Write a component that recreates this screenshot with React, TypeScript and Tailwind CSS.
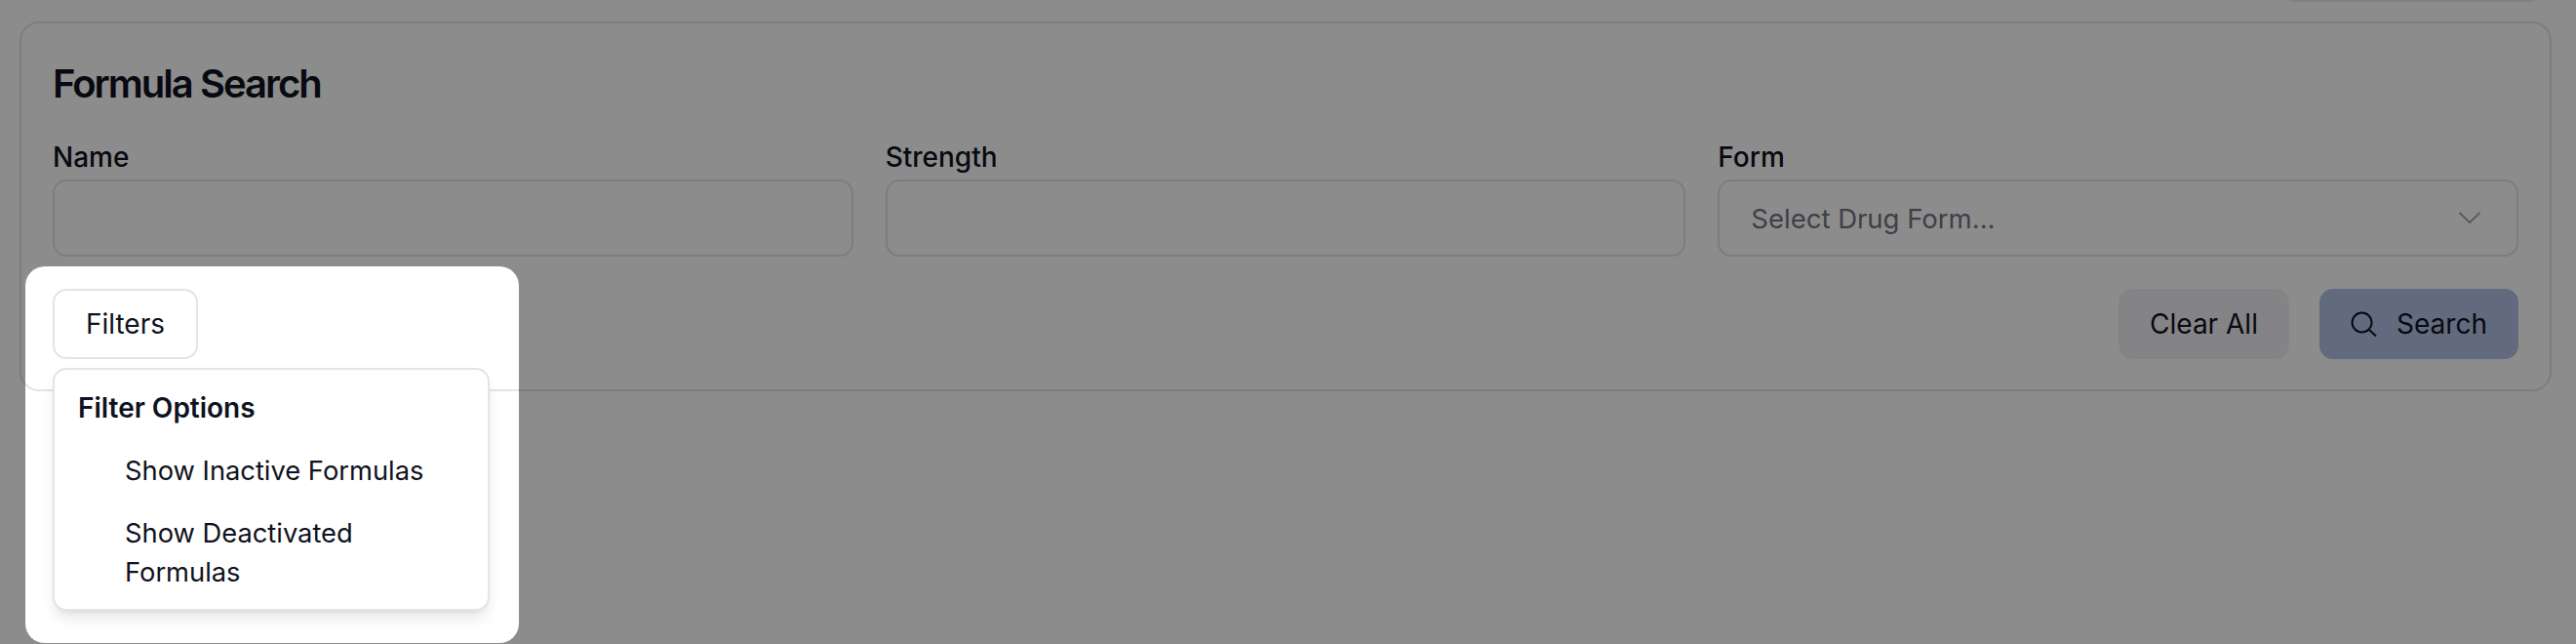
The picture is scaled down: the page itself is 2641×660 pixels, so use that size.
import React from 'react';

const FieldLabel: React.FC<{ children: React.ReactNode }> = ({ children }) => (
  <label className="block h-[40px] text-[28px] leading-[42px] font-medium text-[#0f1220]">{children}</label>
);

const SearchIcon = () => (
  <svg width="27" height="27" viewBox="0 0 27 27" fill="none" stroke="currentColor" strokeWidth="2">
    <circle cx="11.5" cy="11.5" r="10" />
    <path d="M19 19L26 25.5" />
  </svg>
);

const ChevronIcon = () => (
  <svg width="24" height="13" viewBox="0 0 24 13" fill="none" stroke="#a8a8b0" strokeWidth="2">
    <path d="M1.5 1L12 11L22.5 1" />
  </svg>
);

export default function App() {
  return (
    <div className="relative h-[660px] w-full overflow-hidden bg-white pt-[22px] font-['Inter',sans-serif]">
      <div className="ml-[20px] mr-[25px] rounded-[20px] border-2 border-[#e4e4e7] bg-white px-[32px] pt-[33px] pb-[31px]">
        <h2 className="h-[54px] text-[40px] leading-[57px] font-semibold tracking-[-0.05em] text-[#0f1220]">Formula Search</h2>

        <div className="mt-[29px] grid grid-cols-3 gap-[33px]">
          <div>
            <FieldLabel>Name</FieldLabel>
            <input className="mt-[4px] block h-[79px] w-full rounded-[14px] border-2 border-[#e4e4e7] bg-white px-[32px] outline-none" />
          </div>
          <div>
            <FieldLabel>Strength</FieldLabel>
            <input className="mt-[4px] block h-[79px] w-full rounded-[14px] border-2 border-[#e4e4e7] bg-white px-[32px] outline-none" />
          </div>
          <div>
            <FieldLabel>Form</FieldLabel>
            <div className="mt-[4px] flex h-[79px] items-center justify-between rounded-[14px] border-2 border-[#e4e4e7] bg-white pl-[32px] pr-[36px] text-[27.5px] text-[#747482]">
              <span className="pt-[2px]">Select Drug Form...</span>
              <ChevronIcon />
            </div>
          </div>
        </div>

        <div className="mt-[33px] flex items-start justify-between">
          <div className="relative">
            <button className="flex h-[72px] w-[149px] items-center justify-center rounded-[14px] border-2 border-[#e4e4e7] bg-white text-[28px] text-[#0f1220]">
              Filters
            </button>
            <div className="absolute left-0 top-[81px] z-10 w-[448px] rounded-[14px] border-2 border-[#e4e4e7] bg-white px-[8px] pt-[7px] pb-[7px] shadow-lg">
              <div className="px-[16px] pt-[12px] pb-[10px] text-[28px] leading-[40px] font-semibold text-[#0f1220]">Filter Options</div>
              <div className="mt-[3px] flex px-[16px] pt-[12px] pb-[10px] text-[27.3px] leading-[40px] text-[#0f1220]">
                <span className="w-[48px] shrink-0" />
                <span>Show Inactive Formulas</span>
              </div>
              <div className="mt-[2px] flex px-[16px] pt-[12px] pb-[10px] text-[27.3px] leading-[40px] text-[#0f1220]">
                <span className="w-[48px] shrink-0" />
                <span>Show Deactivated Formulas</span>
              </div>
            </div>
          </div>
          <div className="flex gap-[31px]">
            <button className="h-[72px] w-[175px] rounded-[14px] bg-[#f0f1f4] text-[28px] text-[#0f1220]">Clear All</button>
            <button className="flex h-[72px] w-[204px] items-center justify-center gap-[20px] rounded-[14px] bg-[#b3c3e6] text-[28px] text-[#0f1220]">
              <SearchIcon />
              <span>Search</span>
            </button>
          </div>
        </div>
      </div>

      <div className="absolute right-[34px] top-[-40px] h-[40px] w-[269px] rounded-[14px] bg-white shadow-[0_1px_3px_rgba(0,0,0,0.15)]" />
      <div className="pointer-events-none absolute left-[26px] top-[273px] z-20 h-[386px] w-[506px] rounded-[20px] shadow-[0_0_0_9999px_rgba(0,0,0,0.45)]" />
    </div>
  );
}
